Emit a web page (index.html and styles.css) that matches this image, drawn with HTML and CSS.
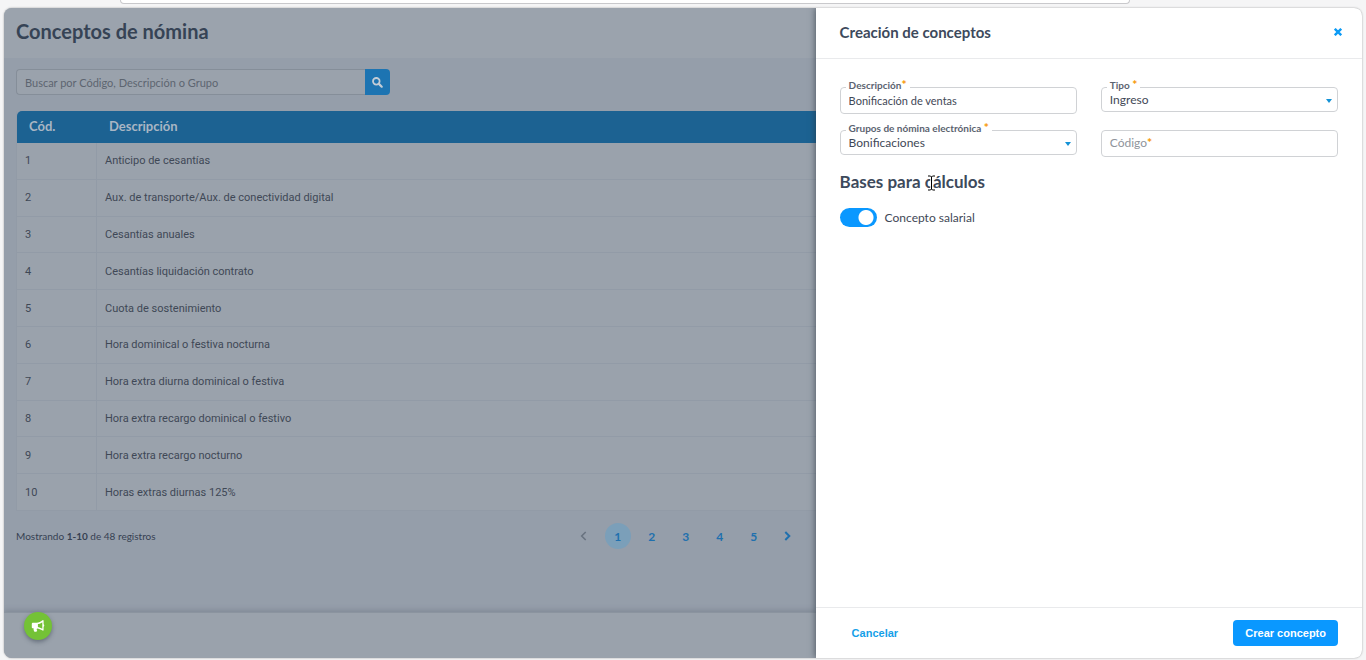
FILE: index.html
```html
<!DOCTYPE html>
<html lang="es">
<head>
    <meta charset="UTF-8">
    <meta name="viewport" content="width=device-width, initial-scale=1.0">
    <title>Conceptos de nómina</title>
    <link rel="stylesheet" href="styles.css">
</head>
<body>
    <div class="browser-bar"></div>
    <div class="app">
        <main class="main">
            <header class="main-header">
                <h1>Conceptos de nómina</h1>
            </header>
            <div class="content">
                <form class="search">
                    <input type="text" aria-label="Buscar" placeholder="Buscar por Código, Descripción o Grupo">
                    <button type="button" aria-label="Buscar">
                        <svg width="11" height="11" viewBox="0 0 11 11" fill="none" stroke="currentColor">
                            <circle cx="4.3" cy="4.3" r="3.3" stroke-width="1.8"/>
                            <path d="M6.9 6.9L9.7 9.7" stroke-width="2.2" stroke-linecap="round"/>
                        </svg>
                    </button>
                </form>
                <table class="concepts">
                    <thead>
                        <tr><th class="code">Cód.</th><th>Descripción</th></tr>
                    </thead>
                    <tbody>
                        <tr><td>1</td><td>Anticipo de cesantías</td></tr>
                        <tr><td>2</td><td>Aux. de transporte/Aux. de conectividad digital</td></tr>
                        <tr><td>3</td><td>Cesantías anuales</td></tr>
                        <tr><td>4</td><td>Cesantías liquidación contrato</td></tr>
                        <tr><td>5</td><td>Cuota de sostenimiento</td></tr>
                        <tr><td>6</td><td>Hora dominical o festiva nocturna</td></tr>
                        <tr><td>7</td><td>Hora extra diurna dominical o festiva</td></tr>
                        <tr><td>8</td><td>Hora extra recargo dominical o festivo</td></tr>
                        <tr><td>9</td><td>Hora extra recargo nocturno</td></tr>
                        <tr><td>10</td><td>Horas extras diurnas 125%</td></tr>
                    </tbody>
                </table>
                <div class="table-footer">
                    <span class="count">Mostrando <b>1-10</b> de 48 registros</span>
                    <nav class="pagination">
                        <button type="button" class="prev" aria-label="Anterior">
                            <svg width="7" height="10" viewBox="0 0 7 10" fill="none" stroke="currentColor" stroke-width="1.6"><path d="M5.7 1L1.7 5L5.7 9"/></svg>
                        </button>
                        <button type="button" class="current">1</button>
                        <button type="button">2</button>
                        <button type="button">3</button>
                        <button type="button">4</button>
                        <button type="button">5</button>
                        <button type="button" aria-label="Siguiente">
                            <svg width="7" height="10" viewBox="0 0 7 10" fill="none" stroke="currentColor" stroke-width="2"><path d="M1.3 1L5.3 5L1.3 9"/></svg>
                        </button>
                    </nav>
                </div>
            </div>
            <footer class="main-footer"></footer>
            <button type="button" class="fab" aria-label="Novedades">
                <svg width="14" height="14" viewBox="0 0 14 14" fill="currentColor">
                    <path fill-rule="evenodd" d="M12 1C12.4 1 12.6 1.3 12.6 1.7V5.2C13.5 5.6 13.5 7.4 12.6 7.8V11C12.6 11.8 12 11.9 11.5 11.6C9.8 10.3 8 9.6 6 9.4C5.5 10.3 5.7 11 6.2 11.8C6 12.8 3.9 13 3.2 12.4C2.8 11.5 2.4 10.6 2.6 9.3H1.9C1.2 9.3.8 8.8.8 8.2V4.9C.8 4.2 1.3 3.7 2 3.7H5.6C7.8 3.6 9.7 2.6 11.5 1.2ZM11.3 3.2C9.9 4.2 8.5 4.9 6.9 5.1V7.9C8.5 8.1 9.9 8.8 11.3 9.7Z"/>
                </svg>
            </button>
        </main>
        <aside class="panel">
            <header class="panel-header">
                <h2>Creación de conceptos</h2>
                <button type="button" class="close" aria-label="Cerrar">
                    <svg width="8" height="8" viewBox="0 0 8 8" stroke="currentColor" stroke-width="2.4"><path d="M.8 .8L7.2 7.2M7.2 .8L.8 7.2"/></svg>
                </button>
            </header>
            <div class="panel-body">
                <form class="fields">
                    <div class="field">
                        <input type="text" id="descripcion" value="Bonificación de ventas">
                        <label for="descripcion">Descripción<i>*</i></label>
                    </div>
                    <div class="field">
                        <select id="tipo"><option>Ingreso</option></select>
                        <label for="tipo">Tipo <i>*</i></label>
                        <span class="caret"></span>
                    </div>
                    <div class="field">
                        <select id="grupo"><option>Bonificaciones</option></select>
                        <label for="grupo">Grupos de nómina electrónica <i>*</i></label>
                        <span class="caret"></span>
                    </div>
                    <div class="field empty">
                        <input type="text" id="codigo">
                        <label for="codigo">Código<i>*</i></label>
                    </div>
                </form>
                <h3>Bases para cálculos
                    <svg class="cursor" width="9" height="16" viewBox="0 0 9 16" fill="none">
                        <path d="M1 1H3.5L4.5 2L5.5 1H8M4.5 2V14M1 15H3.5L4.5 14L5.5 15H8" stroke="#fff" stroke-width="2.6"/>
                        <path d="M1 1H3.5L4.5 2L5.5 1H8M4.5 2V14M1 15H3.5L4.5 14L5.5 15H8" stroke="#000"/>
                    </svg>
                </h3>
                <label class="switch">
                    <input type="checkbox" checked>
                    <span>Concepto salarial</span>
                </label>
            </div>
            <footer class="panel-footer">
                <button type="button" class="cancel">Cancelar</button>
                <button type="button" class="create">Crear concepto</button>
            </footer>
        </aside>
    </div>
</body>
</html>
```
FILE: styles.css
```css
* {
    box-sizing: border-box;
}
body {
    margin: 0;
    height: 100vh;
    padding: 0 4px 2px;
    display: flex;
    flex-direction: column;
    background-color: #f5f5f6;
    font-family: Lato, "Open Sans", sans-serif;
    font-size: 12px;
    color: #3f4856;
    overflow: hidden;
}
h1, h2, h3 {
    margin: 0;
    color: #3d4a5c;
}
button {
    padding: 0;
    border: none;
    background: none;
    font: inherit;
    cursor: pointer;
}
svg {
    display: block;
}
.browser-bar {
    height: 4px;
    margin: 0 232px 4px 116px;
    background-color: #fff;
    border: 1px solid #c9c9cc;
    border-top: none;
    border-radius: 0 0 12px 12px;
}
.app {
    flex: 1;
    display: flex;
    border-radius: 8px;
    overflow: hidden;
    box-shadow: 0 0 2px #999;
}
.main {
    flex: 1;
    position: relative;
    display: flex;
    flex-direction: column;
    background-color: #959eaa;
}
.main-header {
    height: 50px;
    padding: 0 12px;
    background-color: #9ba3ad;
}
.main-header h1 {
    font-size: 20px;
    line-height: 46px;
    color: #364355;
}
.content {
    flex: 1;
    padding: 11px 0 0 12px;
}
.search {
    display: flex;
    width: 374px;
    height: 26px;
    margin-bottom: 16px;
}
.search input {
    flex: 1;
    padding: 0 8px;
    border: 1px solid #858e99;
    border-right: none;
    border-radius: 4px 0 0 4px;
    background-color: #9aa2ac;
    font: inherit;
    font-size: 11px;
}
.search input::placeholder {
    color: #5d6570;
}
.search button {
    width: 25px;
    padding-left: 7px;
    border-radius: 0 4px 4px 0;
    background-color: #1d74b2;
    color: #c3ccd6;
}
.concepts {
    width: 100%;
    height: 400px;
    border-spacing: 0;
    border-left: 1px solid #929ba7;
}
.concepts th {
    height: 32px;
    padding: 0 12px 2px;
    background-color: #1c6292;
    color: #a9b6c4;
    font-size: 13px;
    text-align: left;
}
.concepts th:first-child {
    border-radius: 5px 0 0 0;
}
.concepts .code {
    width: 80px;
}
.concepts td {
    padding: 0 8px;
    border-bottom: 1px solid #929ba7;
    background-color: #9aa2ac;
    font-family: Roboto, sans-serif;
    font-size: 11px;
}
.concepts td:first-child {
    border-right: 1px solid #929ba7;
}
.table-footer {
    display: flex;
    justify-content: space-between;
    align-items: center;
    height: 50px;
    padding-right: 15px;
}
.count {
    font-size: 10px;
    color: #364152;
}
.pagination {
    display: flex;
    gap: 8px;
}
.pagination button {
    display: flex;
    justify-content: center;
    align-items: center;
    width: 26px;
    height: 26px;
    border-radius: 50%;
    color: #1f70ae;
    font-weight: bold;
}
.pagination .prev {
    color: #697380;
}
.pagination .current {
    background-color: #7b9fb9;
}
.main-footer {
    height: 46px;
    border-top: 1px solid #8b949f;
    background-color: #9aa2ac;
    box-shadow: 0 -2px 5px rgba(70, 80, 95, 0.25);
}
.fab {
    position: absolute;
    left: 20px;
    bottom: 18px;
    display: flex;
    justify-content: center;
    align-items: center;
    width: 28px;
    height: 28px;
    border-radius: 50%;
    background-color: #74c236;
    color: #fff;
    box-shadow: 0 2px 4px rgba(50, 60, 75, 0.5);
}
.panel {
    position: relative;
    width: 40vw;
    display: flex;
    flex-direction: column;
    background-color: #fff;
    box-shadow: -1px 0 6px rgba(40, 50, 60, 0.6);
}
.panel-header {
    display: flex;
    justify-content: space-between;
    align-items: center;
    height: 51px;
    padding: 0 20px 2px 24px;
    border-bottom: 1px solid #e9eaec;
}
.panel-header h2 {
    font-size: 15px;
}
.close {
    color: #0d9bf5;
}
.panel-body {
    flex: 1;
    padding: 28px 24px;
}
.fields {
    display: grid;
    grid-template-columns: 1fr 1fr;
    gap: 16px 24px;
    align-items: start;
}
.field {
    position: relative;
    height: 27px;
}
.field input,
.field select {
    display: block;
    width: 100%;
    height: 27px;
    padding: 0 8px;
    border: 1px solid #d0d2d5;
    border-radius: 4px;
    background-color: #fff;
    color: #3f4856;
    font: inherit;
    font-size: 11px;
    appearance: none;
}
.field select {
    height: 25px;
    font-size: 12px;
}
.field label {
    position: absolute;
    top: -9px;
    left: 6px;
    padding: 0 3px;
    background-color: #fff;
    color: #5b6370;
    font-size: 10px;
    font-weight: bold;
    line-height: 14px;
}
.field i {
    color: #f79a0c;
    font-size: 12px;
    font-style: normal;
    font-weight: 900;
    line-height: 10px;
}
.field.empty label {
    top: 6px;
    color: #8f949b;
    font-size: 12px;
    font-weight: normal;
}
.caret {
    position: absolute;
    top: 12px;
    right: 6px;
    border: 3px solid transparent;
    border-top: 4px solid #1492d6;
    border-bottom: none;
    pointer-events: none;
}
.panel-body h3 {
    position: relative;
    margin: 15px 0 16px;
    font-size: 17px;
    line-height: 20px;
}
.cursor {
    position: absolute;
    top: 3px;
    left: 87px;
}
.switch {
    display: inline-flex;
    align-items: center;
    gap: 8px;
}
.switch input {
    appearance: none;
    width: 37px;
    height: 19px;
    margin: 0;
    border-radius: 10px;
    background: radial-gradient(circle at 26px 50%, #fff 7px, #0a98ff 8px);
}
.panel-footer {
    display: flex;
    justify-content: space-between;
    align-items: center;
    height: 51px;
    padding: 0 24px;
    border-top: 1px solid #e9eaec;
    font: bold 11px "Liberation Sans", Arial, sans-serif;
}
.cancel {
    padding: 0 12px;
    color: #159fe8;
}
.create {
    height: 26px;
    padding: 0 12px;
    border-radius: 4px;
    background-color: #0a98ff;
    color: #fff;
}
```
